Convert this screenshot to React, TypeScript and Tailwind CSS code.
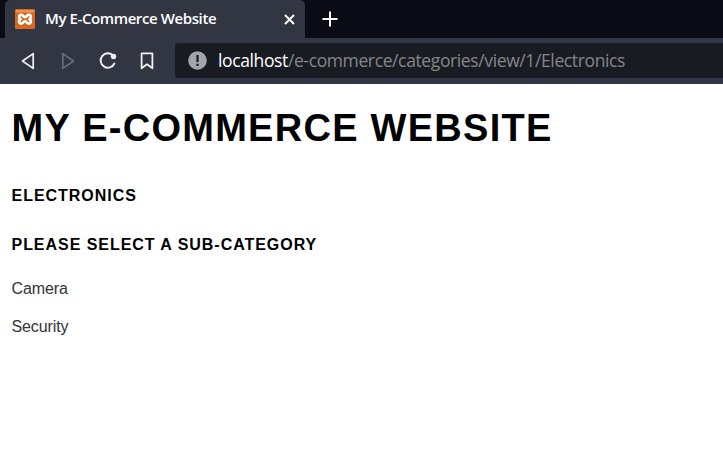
function XamppLogo() {
  return (
    <svg className="size-5 shrink-0" viewBox="0 0 20 20" fill="none">
      <rect width="20" height="20" rx="1" fill="#d9661f" />
      <rect x="1" y="1" width="18" height="2.5" fill="#ee9155" />
      <path
        d="M7 6C4.2 4.9 3 8.8 5.6 10.2C3 11.6 4.2 15.5 7 14.4C8.6 13.7 8.4 12.3 10 12.3S11.4 13.7 13 14.4C15.8 15.5 17 11.6 14.4 10.2C17 8.8 15.8 4.9 13 6C11.4 6.7 11.6 8.1 10 8.1S8.6 6.7 7 6Z"
        stroke="#fff"
        strokeWidth="2.6"
        strokeLinejoin="round"
      />
    </svg>
  );
}

function BrowserTabs() {
  return (
    <div className="flex h-[38px] shrink-0 bg-[#0a0b14] pl-[5px] text-white">
      <div className="flex w-[300px] items-center rounded-t-[5px] bg-[#323542] pl-2.5">
        <XamppLogo />
        <span className="-mt-0.5 ml-2.5 whitespace-nowrap font-['Open_Sans',sans-serif] text-[15px] leading-5 font-semibold tracking-[-0.4px]">
          My E-Commerce Website
        </span>
        <svg className="mr-2.5 ml-auto size-[11px]" viewBox="0 0 11 11" stroke="currentColor" strokeWidth="2">
          <path d="M1 1l9 9M10 1l-9 9" />
        </svg>
      </div>
      <svg className="mt-[11px] ml-[17px] size-4" viewBox="0 0 16 16" stroke="currentColor" strokeWidth="2">
        <path d="M8 .5v15M.5 8h15" />
      </svg>
    </div>
  );
}

function Toolbar() {
  return (
    <div className="flex h-[46px] shrink-0 items-center bg-[#323542] pb-px text-[#f0f0f2]">
      <div className="flex w-[175px] shrink-0 items-center pl-[21px]">
        <svg className="h-[18px] w-[14px]" viewBox="0 0 14 18" fill="none" stroke="currentColor" strokeWidth="1.7" strokeLinejoin="round">
          <path d="M12.2 1.6v14.8L1.5 9Z" />
        </svg>
        <svg className="ml-[26px] h-[18px] w-[14px] text-[#6a6c77]" viewBox="0 0 14 18" fill="none" stroke="currentColor" strokeWidth="1.7" strokeLinejoin="round">
          <path d="M1.8 1.6v14.8L12.5 9Z" />
        </svg>
        <svg className="ml-6 h-[18px] w-[18px]" viewBox="0 0 18 18" fill="none" stroke="currentColor" strokeWidth="1.9">
          <path d="M13.8 3.2A7.2 7.2 0 1 0 15.4 11.5" strokeLinecap="round" />
          <circle cx="14.5" cy="4.5" r="2.7" fill="currentColor" stroke="none" />
        </svg>
        <svg className="ml-[23px] h-[18px] w-[14px]" viewBox="0 0 14 18" fill="none" stroke="currentColor" strokeWidth="1.8" strokeLinejoin="round">
          <path d="M1.6 1.4h10.8v14.9L7 12.2l-5.4 4.1Z" />
        </svg>
      </div>
      <div className="flex h-[35px] min-w-0 flex-1 items-center rounded-l-[4px] bg-[#191b22] pl-[13px]">
        <svg className="size-[19px] shrink-0" viewBox="0 0 19 19">
          <circle cx="9.5" cy="9.5" r="9.3" fill="#a3a5ad" />
          <path d="M8.4 4h2.2v7H8.4zM8.4 12.7h2.2v2.3H8.4z" fill="#191b22" />
        </svg>
        <span className="ml-[11px] whitespace-nowrap font-['Open_Sans',sans-serif] text-[17.5px] tracking-[-0.38px] text-[#85868a]">
          <span className="text-white">localhost</span>/e-commerce/categories/view/1/Electronics
        </span>
      </div>
    </div>
  );
}

export default function App() {
  return (
    <div className="flex h-[455px] w-[723px] flex-col overflow-hidden bg-white font-['Liberation_Sans',Arial,sans-serif]">
      <BrowserTabs />
      <Toolbar />
      <main className="pt-[21px] pl-[11.5px] text-base text-black">
        <h1 className="text-[38px] leading-[46px] font-bold tracking-[1.27px] whitespace-nowrap">MY E-COMMERCE WEBSITE</h1>
        <h4 className="mt-[35px] leading-5 font-bold tracking-[0.97px]">ELECTRONICS</h4>
        <h4 className="mt-[29px] leading-5 font-bold tracking-[0.96px]">PLEASE SELECT A SUB-CATEGORY</h4>
        <nav className="mt-6 flex flex-col gap-[18px] leading-5 tracking-[-0.1px] text-[#333]">
          <a>Camera</a>
          <a>Security</a>
        </nav>
      </main>
    </div>
  );
}
